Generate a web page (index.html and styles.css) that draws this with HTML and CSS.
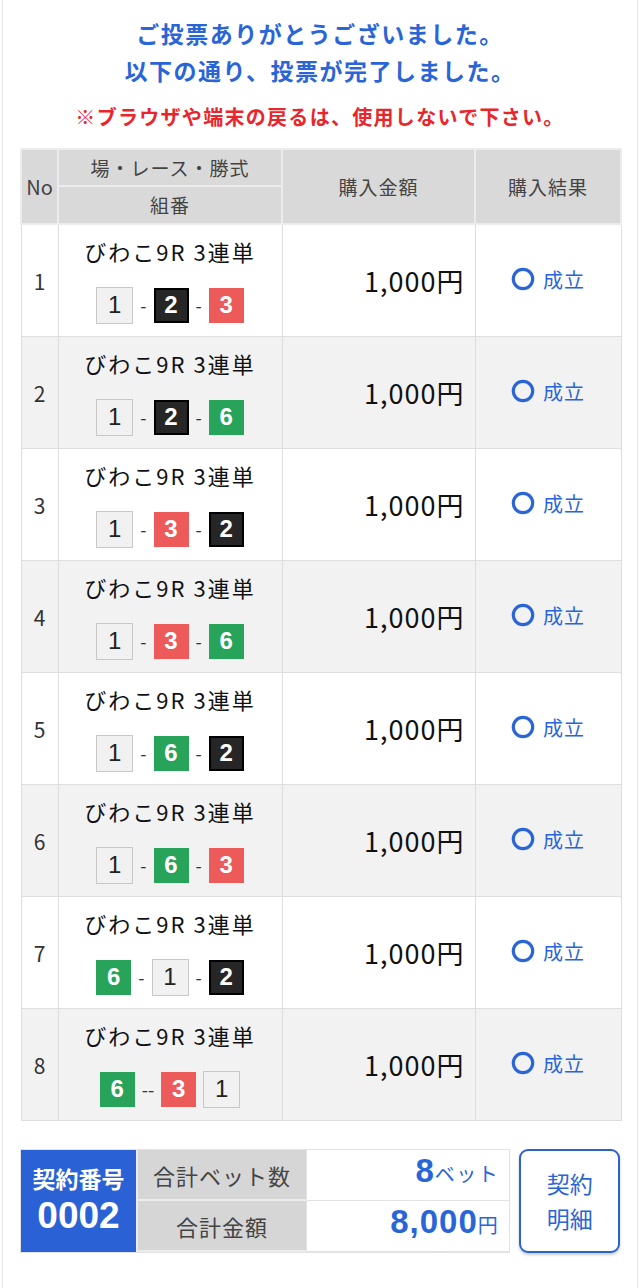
FILE: index.html
```html
<!DOCTYPE html>
<html lang="ja">
<head>
    <meta charset="UTF-8">
    <meta name="viewport" content="width=device-width, initial-scale=1.0">
    <title>投票完了</title>
    <link rel="stylesheet" href="styles.css">
</head>
<body>
  <div class="page">
    <div class="message">
      <p class="thanks">ご投票ありがとうございました。<br>以下の通り、投票が完了しました。</p>
      <p class="warn">※ブラウザや端末の戻るは、使用しないで下さい。</p>
    </div>

    <table class="bets">
      <colgroup>
        <col class="c-no"><col class="c-race"><col class="c-amount"><col class="c-result">
      </colgroup>
      <thead>
        <tr class="h1">
          <th rowspan="2" class="h-no">No</th>
          <th>場・レース・勝式</th>
          <th rowspan="2">購入金額</th>
          <th rowspan="2">購入結果</th>
        </tr>
        <tr class="h2"><th>組番</th></tr>
      </thead>
      <tbody>
        <tr>
          <td class="no">1</td>
          <td class="race"><div class="name">びわこ9R 3連単</div>
            <div class="combo"><span class="bx w">1</span>-<span class="bx k">2</span>-<span class="bx r">3</span></div></td>
          <td class="amount">1,000円</td>
          <td class="result"><span class="ok"><svg width="24" height="24" viewBox="0 0 24 24"><circle cx="12" cy="12" r="9.7" fill="none" stroke="currentColor" stroke-width="3.2"/></svg>成立</span></td>
        </tr>
        <tr>
          <td class="no">2</td>
          <td class="race"><div class="name">びわこ9R 3連単</div>
            <div class="combo"><span class="bx w">1</span>-<span class="bx k">2</span>-<span class="bx g">6</span></div></td>
          <td class="amount">1,000円</td>
          <td class="result"><span class="ok"><svg width="24" height="24" viewBox="0 0 24 24"><circle cx="12" cy="12" r="9.7" fill="none" stroke="currentColor" stroke-width="3.2"/></svg>成立</span></td>
        </tr>
        <tr>
          <td class="no">3</td>
          <td class="race"><div class="name">びわこ9R 3連単</div>
            <div class="combo"><span class="bx w">1</span>-<span class="bx r">3</span>-<span class="bx k">2</span></div></td>
          <td class="amount">1,000円</td>
          <td class="result"><span class="ok"><svg width="24" height="24" viewBox="0 0 24 24"><circle cx="12" cy="12" r="9.7" fill="none" stroke="currentColor" stroke-width="3.2"/></svg>成立</span></td>
        </tr>
        <tr>
          <td class="no">4</td>
          <td class="race"><div class="name">びわこ9R 3連単</div>
            <div class="combo"><span class="bx w">1</span>-<span class="bx r">3</span>-<span class="bx g">6</span></div></td>
          <td class="amount">1,000円</td>
          <td class="result"><span class="ok"><svg width="24" height="24" viewBox="0 0 24 24"><circle cx="12" cy="12" r="9.7" fill="none" stroke="currentColor" stroke-width="3.2"/></svg>成立</span></td>
        </tr>
        <tr>
          <td class="no">5</td>
          <td class="race"><div class="name">びわこ9R 3連単</div>
            <div class="combo"><span class="bx w">1</span>-<span class="bx g">6</span>-<span class="bx k">2</span></div></td>
          <td class="amount">1,000円</td>
          <td class="result"><span class="ok"><svg width="24" height="24" viewBox="0 0 24 24"><circle cx="12" cy="12" r="9.7" fill="none" stroke="currentColor" stroke-width="3.2"/></svg>成立</span></td>
        </tr>
        <tr>
          <td class="no">6</td>
          <td class="race"><div class="name">びわこ9R 3連単</div>
            <div class="combo"><span class="bx w">1</span>-<span class="bx g">6</span>-<span class="bx r">3</span></div></td>
          <td class="amount">1,000円</td>
          <td class="result"><span class="ok"><svg width="24" height="24" viewBox="0 0 24 24"><circle cx="12" cy="12" r="9.7" fill="none" stroke="currentColor" stroke-width="3.2"/></svg>成立</span></td>
        </tr>
        <tr>
          <td class="no">7</td>
          <td class="race"><div class="name">びわこ9R 3連単</div>
            <div class="combo"><span class="bx g">6</span>-<span class="bx w">1</span>-<span class="bx k">2</span></div></td>
          <td class="amount">1,000円</td>
          <td class="result"><span class="ok"><svg width="24" height="24" viewBox="0 0 24 24"><circle cx="12" cy="12" r="9.7" fill="none" stroke="currentColor" stroke-width="3.2"/></svg>成立</span></td>
        </tr>
        <tr>
          <td class="no">8</td>
          <td class="race"><div class="name">びわこ9R 3連単</div>
            <div class="combo"><span class="bx g">6</span>--<span class="bx r">3</span><span class="bx w">1</span></div></td>
          <td class="amount">1,000円</td>
          <td class="result"><span class="ok"><svg width="24" height="24" viewBox="0 0 24 24"><circle cx="12" cy="12" r="9.7" fill="none" stroke="currentColor" stroke-width="3.2"/></svg>成立</span></td>
        </tr>
      </tbody>
    </table>

    <div class="summary">
      <div class="sum-grid">
        <div class="contract">
          <span class="c-label">契約番号</span>
          <span class="c-num">0002</span>
        </div>
        <div class="lbl">合計ベット数</div>
        <div class="val"><b>8</b><small>ベット</small></div>
        <div class="lbl">合計金額</div>
        <div class="val"><b>8,000</b><small>円</small></div>
      </div>
      <button class="detail">契約<br>明細</button>
    </div>
  </div>
</body>
</html>
```

FILE: styles.css
```css
body{
  margin: 0;
  background: #fff;
  font-family: "Noto Sans CJK JP", "Liberation Sans", sans-serif;
  color: #222;
}
.page{
  margin: 0 2px;
  border-left: 1px solid #e4e4e4;
  border-right: 1px solid #e4e4e4;
  min-height: 1288px;
  padding: 0 17px;
}
.message{
  text-align: center;
  padding-top: 15px;
}
.thanks{
  margin: 0;
  color: #2a65d8;
  font-size: 23px;
  font-weight: bold;
  letter-spacing: 1.5px;
  line-height: 37px;
}
.warn{
  margin: 17px 0 0;
  color: #e8262b;
  font-size: 20px;
  font-weight: bold;
  letter-spacing: 1.3px;
  line-height: 22px;
}
.bets{
  margin-top: 20px;
  width: 600px;
  border-collapse: collapse;
  table-layout: fixed;
}
.c-no{ width: 37px; }
.c-race{ width: 224px; }
.c-amount{ width: 193px; }
.c-result{ width: 146px; }
.bets th{
  background: #d9d9d9;
  color: #444;
  font-size: 19px;
  letter-spacing: 1px;
  font-weight: normal;
  line-height: 24px;
  border: 2px solid #ececec;
  padding: 0;
}
.bets th.h-no{ font-size: 20px; letter-spacing: 0; }
.h1 th{ height: 35px; }
.h2 th{ height: 36px; }
.bets td{
  border: 1px solid #dddddd;
  height: 111px;
  padding: 0;
  vertical-align: middle;
}
.bets tbody tr:nth-child(even) td{ background: #f2f2f2; }
.no{
  text-align: center;
  font-size: 21px;
  color: #333;
}
.race{ text-align: center; }
.name{
  font-size: 22px;
  letter-spacing: 2px;
  color: #111;
  line-height: 26px;
  margin-bottom: 23px;
}
.combo{
  display: flex;
  justify-content: center;
  align-items: center;
  gap: 7px;
  font-size: 18px;
  line-height: 20px;
  color: #333;
}
.bx{
  display: inline-flex;
  align-items: center;
  justify-content: center;
  width: 35px;
  height: 35px;
  box-sizing: border-box;
  font-family: "Liberation Sans", sans-serif;
  font-size: 24px;
  font-weight: bold;
}
.bx.w{ background: #f1f1f1; border: 1px solid #c8c8c8; color: #222; font-weight: normal; width: 37px; height: 37px; }
.bx.k{ background: #262626; border: 2px solid #000; color: #fff; }
.bx.r{ background: #ec5a5a; color: #fff; }
.bx.g{ background: #27a35a; color: #fff; }
.amount{
  text-align: right;
  padding-right: 10px !important;
  font-size: 27px;
  letter-spacing: 1px;
  color: #111;
}
.result{ text-align: center; }
.ok{
  display: inline-flex;
  align-items: center;
  gap: 8px;
  color: #2a65d8;
  font-size: 20px;
  letter-spacing: 1px;
}
.summary{
  margin-top: 28px;
  display: flex;
  gap: 9px;
  align-items: stretch;
}
.sum-grid{
  width: 490px;
  display: grid;
  grid-template-columns: 115px 170px 1fr;
  grid-template-rows: 51px 51px;
  border: 1px solid #e2e2e2;
}
.contract{
  grid-row: 1 / 3;
  background: #2a62d6;
  color: #fff;
  display: flex;
  flex-direction: column;
  align-items: center;
  justify-content: center;
  font-weight: bold;
}
.c-label{ font-size: 23px; line-height: 30px; }
.c-num{ font-size: 37px; line-height: 46px; font-family: "Liberation Sans", sans-serif; }
.lbl{
  background: #d6d6d6;
  color: #444;
  font-size: 22px;
  letter-spacing: 1px;
  display: flex;
  align-items: center;
  justify-content: center;
  border-left: 2px solid #ececec;
  border-bottom: 2px solid #ececec;
}
.val{
  background: #fff;
  color: #2a65d8;
  display: flex;
  align-items: baseline;
  justify-content: flex-end;
  padding: 2px 10px 0 0;
  border-left: 1px solid #e2e2e2;
  border-bottom: 1px solid #e2e2e2;
}
.val b{ font-family: "Liberation Sans", sans-serif; font-size: 33px; letter-spacing: 1px; }
.val small{ font-size: 20px; letter-spacing: 1.5px; }
.detail{
  width: 101px;
  border: 2px solid #2a62d6;
  border-radius: 9px;
  background: #fff;
  color: #2a65d8;
  font-family: inherit;
  font-size: 23px;
  line-height: 35px;
  box-shadow: 0 2px 3px rgba(0,0,0,0.2);
}
```
